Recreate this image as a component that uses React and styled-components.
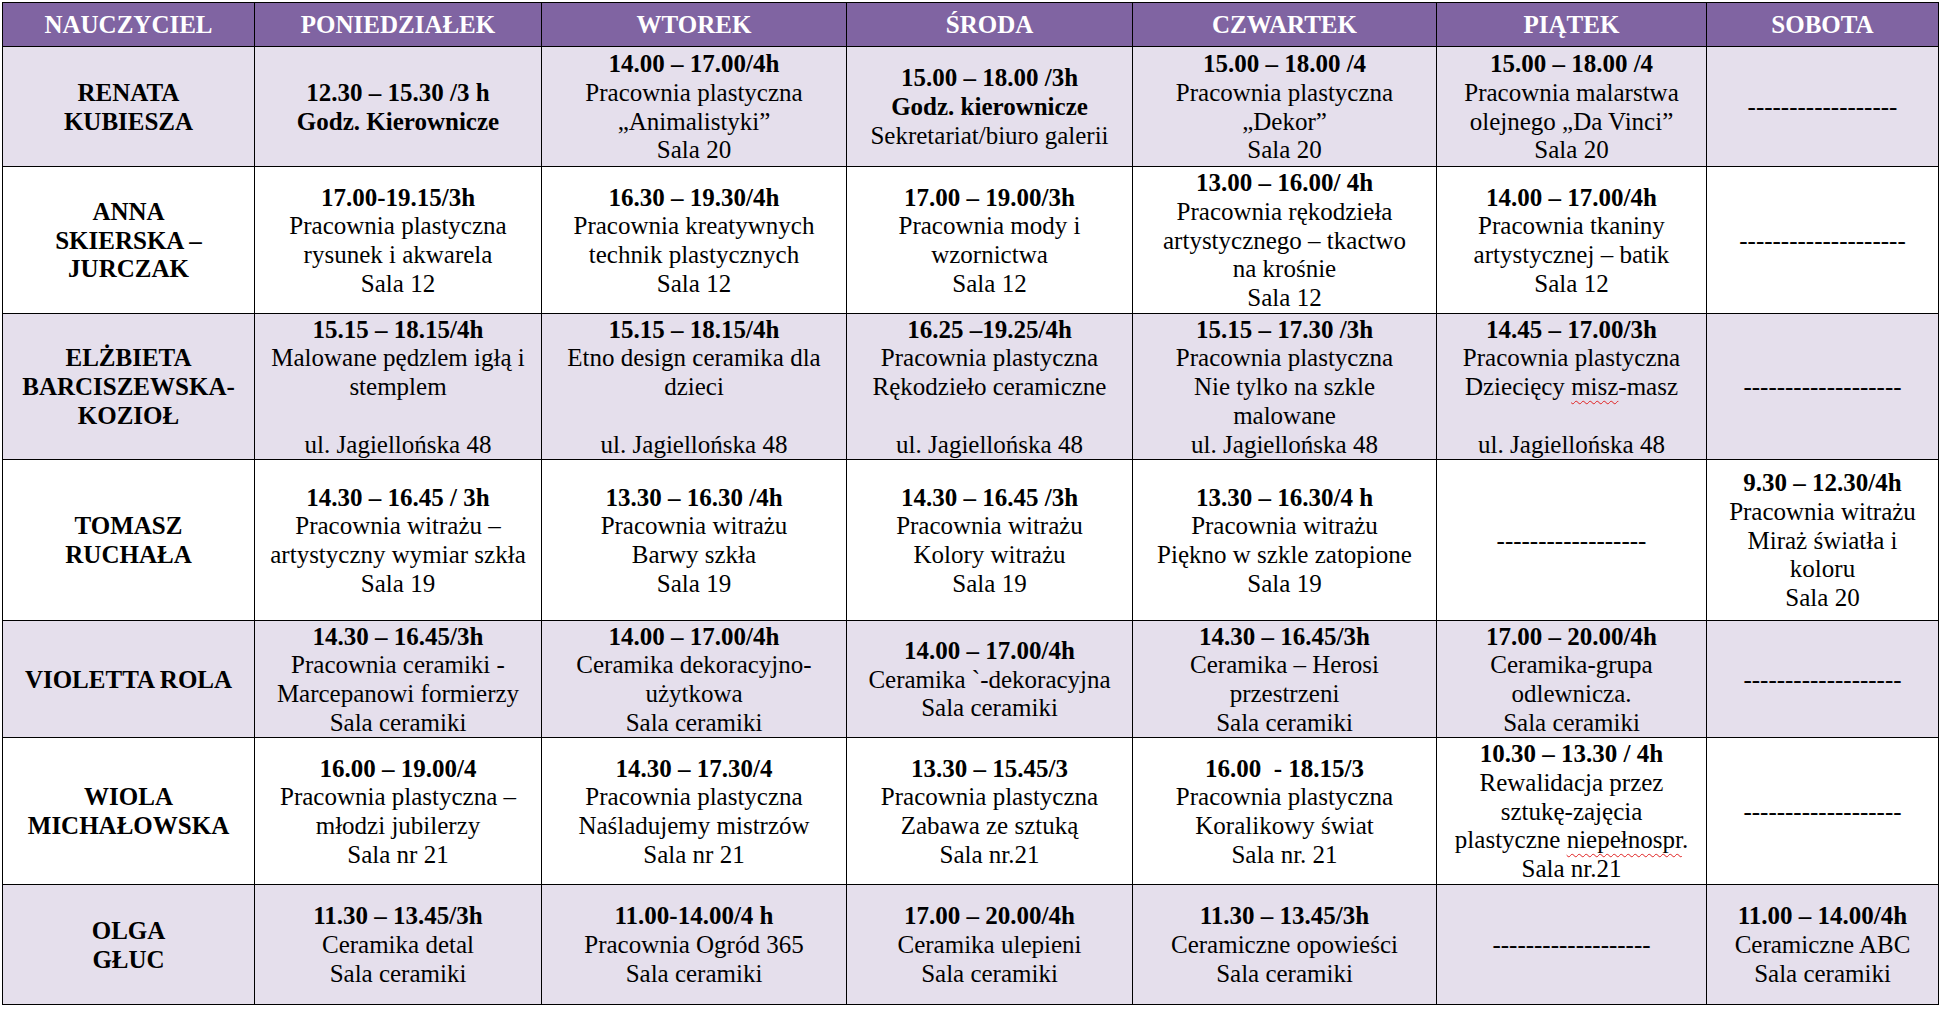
import React from 'react';
import styled, { createGlobalStyle } from 'styled-components';

const GlobalStyle = createGlobalStyle`
  body {
    margin: 0;
    background: #fff;
    font-family: "Liberation Serif", "Times New Roman", serif;
    color: #000;
  }
`;

const Page = styled.div`
  padding: 2px 0 0 2px;
`;

// the whole timetable, black gaps act as the cell borders
const Table = styled.div`
  display: grid;
  grid-template-columns: 251px 286px 304px 285px 303px 269px 231px;
  grid-template-rows: 43px 119px 146px 145px 160px 116px 146px 119px;
  gap: 1px;
  padding: 1px;
  background: #000;
  width: max-content;
`;

const HeaderCell = styled.div`
  background: #8064a2;
  color: #fff;
  font-weight: bold;
  font-size: 25px;
  display: flex;
  align-items: center;
  justify-content: center;
  white-space: nowrap;
`;

const Cell = styled.div`
  background: ${p => (p.$shaded ? '#e5dfec' : '#fff')};
  display: flex;
  flex-direction: column;
  align-items: center;
  justify-content: center;
  padding-top: 2px;
  text-align: center;
  font-size: 25px;
  line-height: 28.75px;
  font-weight: ${p => (p.$name ? 'bold' : 'normal')};
  white-space: nowrap;
`;

const Line = styled.div`
  font-weight: ${p => (p.$bold ? 'bold' : 'inherit')};
`;

const Misspelled = styled.span`
  text-decoration: underline wavy #e02020;
  text-decoration-thickness: 1px;
  text-underline-offset: 5px;
`;

const days = ['NAUCZYCIEL', 'PONIEDZIAŁEK', 'WTOREK', 'ŚRODA', 'CZWARTEK', 'PIĄTEK', 'SOBOTA'];

const dash = n => '-'.repeat(n);

// "**" at the start marks a bold line, arrays hold a spelling-marked word
const rows = [
  {
    name: ['RENATA', 'KUBIESZA'],
    cells: [
      ['**12.30 – 15.30 /3 h', '**Godz. Kierownicze'],
      ['**14.00 – 17.00/4h', 'Pracownia plastyczna', '„Animalistyki”', 'Sala 20'],
      ['**15.00 – 18.00 /3h', '**Godz. kierownicze', 'Sekretariat/biuro galerii'],
      ['**15.00 – 18.00 /4', 'Pracownia plastyczna', '„Dekor”', 'Sala 20'],
      ['**15.00 – 18.00 /4', 'Pracownia malarstwa', 'olejnego „Da Vinci”', 'Sala 20'],
      [dash(18)],
    ],
  },
  {
    name: ['ANNA', 'SKIERSKA –', 'JURCZAK'],
    cells: [
      ['**17.00-19.15/3h', 'Pracownia plastyczna', 'rysunek i akwarela', 'Sala 12'],
      ['**16.30 – 19.30/4h', 'Pracownia kreatywnych', 'technik plastycznych', 'Sala 12'],
      ['**17.00 – 19.00/3h', 'Pracownia mody i', 'wzornictwa', 'Sala 12'],
      ['**13.00 – 16.00/ 4h', 'Pracownia rękodzieła', 'artystycznego – tkactwo', 'na krośnie', 'Sala 12'],
      ['**14.00 – 17.00/4h', 'Pracownia tkaniny', 'artystycznej – batik', 'Sala 12'],
      [dash(20)],
    ],
  },
  {
    name: ['ELŻBIETA', 'BARCISZEWSKA-', 'KOZIOŁ'],
    cells: [
      ['**15.15 – 18.15/4h', 'Malowane pędzlem igłą i', 'stemplem', '', 'ul. Jagiellońska 48'],
      ['**15.15 – 18.15/4h', 'Etno design ceramika dla', 'dzieci', '', 'ul. Jagiellońska 48'],
      ['**16.25 –19.25/4h', 'Pracownia plastyczna', 'Rękodzieło ceramiczne', '', 'ul. Jagiellońska 48'],
      ['**15.15 – 17.30 /3h', 'Pracownia plastyczna', 'Nie tylko na szkle', 'malowane', 'ul. Jagiellońska 48'],
      ['**14.45 – 17.00/3h', 'Pracownia plastyczna', ['Dziecięcy ', 'misz', '-masz'], '', 'ul. Jagiellońska 48'],
      [dash(19)],
    ],
  },
  {
    name: ['TOMASZ', 'RUCHAŁA'],
    cells: [
      ['**14.30 – 16.45 / 3h', 'Pracownia witrażu –', 'artystyczny wymiar szkła', 'Sala 19'],
      ['**13.30 – 16.30 /4h', 'Pracownia witrażu', 'Barwy szkła', 'Sala 19'],
      ['**14.30 – 16.45 /3h', 'Pracownia witrażu', 'Kolory witrażu', 'Sala 19'],
      ['**13.30 – 16.30/4 h', 'Pracownia witrażu', 'Piękno w szkle zatopione', 'Sala 19'],
      [dash(18)],
      ['**9.30 – 12.30/4h', 'Pracownia witrażu', 'Miraż światła i', 'koloru', 'Sala 20'],
    ],
  },
  {
    name: ['VIOLETTA ROLA'],
    cells: [
      ['**14.30 – 16.45/3h', 'Pracownia ceramiki -', 'Marcepanowi formierzy', 'Sala ceramiki'],
      ['**14.00 – 17.00/4h', 'Ceramika dekoracyjno-', 'użytkowa', 'Sala ceramiki'],
      ['**14.00 – 17.00/4h', 'Ceramika `-dekoracyjna', 'Sala ceramiki'],
      ['**14.30 – 16.45/3h', 'Ceramika – Herosi', 'przestrzeni', 'Sala ceramiki'],
      ['**17.00 – 20.00/4h', 'Ceramika-grupa', 'odlewnicza.', 'Sala ceramiki'],
      [dash(19)],
    ],
  },
  {
    name: ['WIOLA', 'MICHAŁOWSKA'],
    cells: [
      ['**16.00 – 19.00/4', 'Pracownia plastyczna –', 'młodzi jubilerzy', 'Sala nr 21'],
      ['**14.30 – 17.30/4', 'Pracownia plastyczna', 'Naśladujemy mistrzów', 'Sala nr 21'],
      ['**13.30 – 15.45/3', 'Pracownia plastyczna', 'Zabawa ze sztuką', 'Sala nr.21'],
      ['**16.00  - 18.15/3', 'Pracownia plastyczna', 'Koralikowy świat', 'Sala nr. 21'],
      ['**10.30 – 13.30 / 4h', 'Rewalidacja przez', 'sztukę-zajęcia', ['plastyczne ', 'niepełnospr', '.'], 'Sala nr.21'],
      [dash(19)],
    ],
  },
  {
    name: ['OLGA', 'GŁUC'],
    cells: [
      ['**11.30 – 13.45/3h', 'Ceramika detal', 'Sala ceramiki'],
      ['**11.00-14.00/4 h', 'Pracownia Ogród 365', 'Sala ceramiki'],
      ['**17.00 – 20.00/4h', 'Ceramika ulepieni', 'Sala ceramiki'],
      ['**11.30 – 13.45/3h', 'Ceramiczne opowieści', 'Sala ceramiki'],
      [dash(19)],
      ['**11.00 – 14.00/4h', 'Ceramiczne ABC', 'Sala ceramiki'],
    ],
  },
];

function CellLine({ line }) {
  if (Array.isArray(line)) {
    const [before, word, after] = line;
    return (
      <Line>
        {before}
        <Misspelled>{word}</Misspelled>
        {after}
      </Line>
    );
  }
  const bold = line.startsWith('**');
  const text = bold ? line.slice(2) : line;
  return <Line $bold={bold}>{text === '' ? '\u00a0' : text.replace(/ {2}/g, ' \u00a0')}</Line>;
}

export default function App() {
  return (
    <Page>
      <GlobalStyle />
      <Table>
        {days.map(day => (
          <HeaderCell key={day}>{day}</HeaderCell>
        ))}
        {rows.map((row, i) => {
          const shaded = i % 2 === 0;
          return (
            <React.Fragment key={row.name.join(' ')}>
              <Cell $shaded={shaded} $name>
                {row.name.map(n => (
                  <Line key={n}>{n}</Line>
                ))}
              </Cell>
              {row.cells.map((cell, j) => (
                <Cell key={j} $shaded={shaded}>
                  {cell.map((line, k) => (
                    <CellLine key={k} line={line} />
                  ))}
                </Cell>
              ))}
            </React.Fragment>
          );
        })}
      </Table>
    </Page>
  );
}
